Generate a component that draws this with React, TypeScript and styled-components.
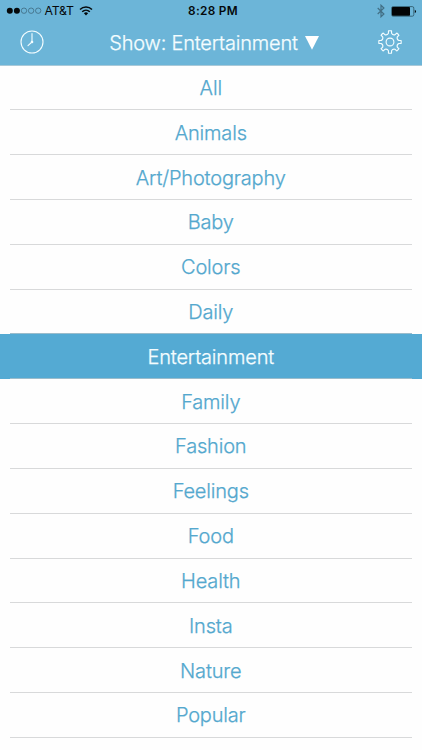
import React from "react";
import styled, { createGlobalStyle } from "styled-components";

const GlobalStyle = createGlobalStyle`
  * { box-sizing: border-box; }
  body { margin: 0; background: #fff; overflow: hidden; }
  button { font: inherit; color: inherit; background: none; border: 0; padding: 0; }
`;

const Screen = styled.main`
  width: 422px;
  height: 750px;
  overflow: hidden;
  background: #fefefe;
  font-family: Inter, "Liberation Sans", sans-serif;
`;

const Header = styled.header`
  height: 65.5px;
  background: #6cb5d8;
  border-bottom: 1px solid #a9c9d8;
`;

const StatusBar = styled.div`
  height: 22px;
  display: grid;
  grid-template-columns: 1fr auto 1fr;
  align-items: center;
  padding: 0 5px 0 6px;
  color: #05090b;
`;

const Carrier = styled.div`
  display: flex;
  align-items: center;
  font-size: 12.3px;
  line-height: 22px;
  letter-spacing: -0.2px;
`;

const CarrierName = styled.span`
  margin: 0 5px 0 2.5px;
`;

const Clock = styled.time`
  padding-left: 3px;
  font-size: 11.8px;
  line-height: 22px;
  font-weight: 600;
  letter-spacing: 0.3px;
`;

const Indicators = styled.div`
  display: flex;
  justify-content: flex-end;
  align-items: center;
  gap: 6px;
`;

const NavBar = styled.nav`
  height: 42px;
  display: grid;
  grid-template-columns: 24px 1fr 24px;
  align-items: center;
  padding: 0 20px;
  color: #f4fdff;
`;

const IconButton = styled.button`
  width: 24px;
  height: 24px;
  display: flex;
  margin-top: -2px;
`;

const FilterButton = styled.button`
  display: flex;
  justify-content: center;
  align-items: center;
  gap: 7.5px;
  padding-left: 6.5px;
  font-size: 20px;
  line-height: 42px;
  font-weight: 300;
  letter-spacing: -0.2px;
  -webkit-text-stroke: 0.25px currentColor;
  white-space: nowrap;
`;

const CategoryList = styled.ul`
  list-style: none;
  margin: 0;
  padding: 0;
`;

const CategoryRow = styled.li<{ $selected: boolean }>`
  height: 44.83px;
  padding: 0 10.5px 0 10px;
  background: ${(p) => (p.$selected ? "#54aad3" : "transparent")};
  color: ${(p) => (p.$selected ? "#f4fdff" : "#54a8ce")};
`;

const CategoryLabel = styled.div<{ $dark: boolean }>`
  height: 100%;
  border-bottom: 1px solid ${(p) => (p.$dark ? "#9bbccb" : "#d8d9da")};
  text-align: center;
  font-size: 20px;
  line-height: 45px;
  padding-top: 0.35px;
  font-weight: 300;
  letter-spacing: -0.18px;
  -webkit-text-stroke: 0.25px currentColor;
`;

const categories = [
  "All", "Animals", "Art/Photography", "Baby", "Colors", "Daily",
  "Entertainment", "Family", "Fashion", "Feelings", "Food", "Health",
  "Insta", "Nature", "Popular",
];
const current = "Entertainment";

const SignalDots = () => (
  <svg width="36" height="8" viewBox="0 0 36 8">
    {[0, 1, 2, 3, 4].map((i) => (
      <circle key={i} cx={3.8 + i * 7.1} cy="3.7" r={i < 2 ? 3 : 2.7}
        fill={i < 2 ? "#05090b" : "none"} stroke={i < 2 ? "none" : "#315365"} strokeWidth="0.6" />
    ))}
  </svg>
);

const WifiIcon = () => (
  <svg width="14" height="10" viewBox="0 0 14 10" fill="none" stroke="currentColor" strokeWidth="1.5">
    <path d="M1 3.5C4.3.3 9.7.3 13 3.5M3.2 5.7C5.4 3.7 8.6 3.7 10.8 5.7" />
    <path d="M7 9.4 4.9 7.3a3 3 0 0 1 4.2 0Z" fill="currentColor" stroke="none" />
  </svg>
);

const BluetoothIcon = () => (
  <svg width="8" height="14" viewBox="0 0 8 14" fill="none" stroke="#426f85" strokeWidth="1.2">
    <path d="m.7 4 6.2 6L4 12.8V1.2L6.9 4 .7 10" />
  </svg>
);

const BatteryIcon = () => (
  <svg width="26" height="11" viewBox="0 0 26 11">
    <rect x=".6" y=".6" width="22.2" height="9.6" rx="1.5" fill="none" stroke="#234653" strokeWidth=".7" />
    <rect x="1" y="1" width="18" height="8.8" rx=".8" fill="#020405" />
    <path d="M23.8 3.7a1.8 1.8 0 0 1 0 3.4Z" fill="#05090b" />
  </svg>
);

const ClockIcon = () => (
  <svg width="24" height="24" viewBox="0 0 24 24" fill="none" stroke="currentColor" strokeWidth="1.1">
    <circle cx="12" cy="12" r="11" />
    <path d="M12 3.5V12L8 15.6" strokeLinecap="round" />
    <circle cx="12" cy="12" r="1.3" fill="currentColor" stroke="none" />
  </svg>
);

const polar = (radius: number, degrees: number) => {
  const a = (degrees * Math.PI) / 180;
  return `${(12 + radius * Math.cos(a)).toFixed(2)} ${(12 + radius * Math.sin(a)).toFixed(2)}`;
};

const gearPath = Array.from({ length: 8 }, (_, i) => {
  const c = i * 45 - 90;
  return `${i === 0 ? "M" : "L"}${polar(8.9, c - 10)}L${polar(11.2, c - 8)}A11.2 11.2 0 0 1 ${polar(11.2, c + 8)}L${polar(8.9, c + 10)}Q${polar(7.1, c + 22.5)} ${polar(8.9, c + 35)}`;
}).join("") + "Z";

const GearIcon = () => (
  <svg width="24" height="24" viewBox="0 0 24 24" fill="none" stroke="currentColor" strokeWidth="1.1" strokeLinejoin="round">
    <path d={gearPath} />
    <circle cx="12" cy="12" r="3.9" />
  </svg>
);

const TriangleIcon = () => (
  <svg width="14" height="14" viewBox="0 0 14 14"><path d="M0 0h14L7 13.7Z" fill="#fff" /></svg>
);

export default function App() {
  return (
    <>
      <GlobalStyle />
      <Screen>
        <Header>
          <StatusBar>
            <Carrier>
              <SignalDots />
              <CarrierName>AT&amp;T</CarrierName>
              <WifiIcon />
            </Carrier>
            <Clock>8:28 PM</Clock>
            <Indicators>
              <BluetoothIcon />
              <BatteryIcon />
            </Indicators>
          </StatusBar>
          <NavBar>
            <IconButton aria-label="History"><ClockIcon /></IconButton>
            <FilterButton><span>Show: {current}</span><TriangleIcon /></FilterButton>
            <IconButton aria-label="Settings"><GearIcon /></IconButton>
          </NavBar>
        </Header>
        <CategoryList>
          {categories.map((name, i) => (
            <CategoryRow key={name} $selected={name === current}>
              <CategoryLabel $dark={name === current || categories[i + 1] === current}>{name}</CategoryLabel>
            </CategoryRow>
          ))}
        </CategoryList>
      </Screen>
    </>
  );
}
